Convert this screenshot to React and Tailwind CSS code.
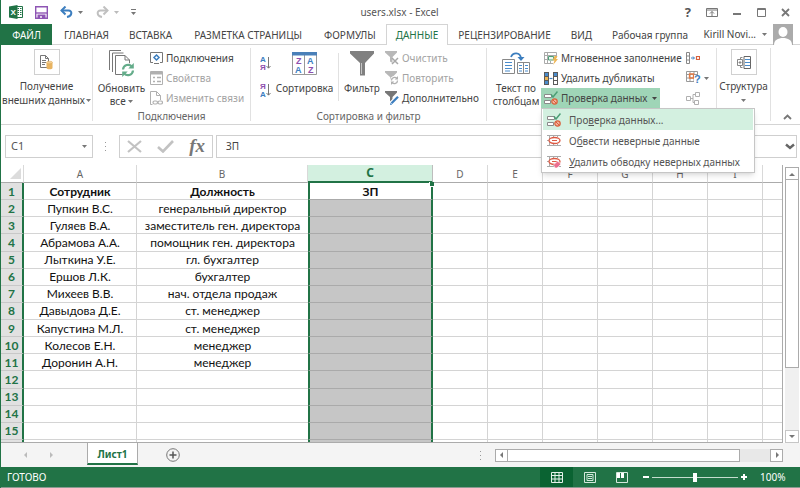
import React, { useState } from 'react';

const employees = [
  ['Пупкин В.С.', 'генеральный директор'],
  ['Гуляев В.А.', 'заместитель ген. директора'],
  ['Абрамова А.А.', 'помощник ген. директора'],
  ['Лыткина У.Е.', 'гл. бухгалтер'],
  ['Ершов Л.К.', 'бухгалтер'],
  ['Михеев В.В.', 'нач. отдела продаж'],
  ['Давыдова Д.Е.', 'ст. менеджер'],
  ['Капустина М.Л.', 'ст. менеджер'],
  ['Колесов Е.Н.', 'менеджер'],
  ['Доронин А.Н.', 'менеджер'],
];

const columns = ['A', 'B', 'C', 'D', 'E', 'F', 'G', 'H', 'I', ''];
const emptyColumns = ['D', 'E', 'F', 'G', 'H', 'I', ''];
const rowNumbers = Array.from({ length: 15 }, (_, i) => i + 1);

/* ---------- icons ---------- */

const Caret = ({ className = 'text-[#777]' }) => (
  <svg className={`inline-block shrink-0 ${className}`} width="5" height="3" viewBox="0 0 5 3">
    <path d="M0 0h5L2.5 3z" fill="currentColor" />
  </svg>
);

const Triangle = ({ dir, className = 'text-[#777]' }) => {
  const paths = {
    up: 'M0 5h6L3 2z',
    down: 'M0 1h6L3 4z',
    left: 'M4 0v6L1 3z',
    right: 'M2 0v6l3-3z',
  };
  return (
    <svg className={className} width="6" height="6" viewBox="0 0 6 6">
      <path d={paths[dir]} fill="currentColor" />
    </svg>
  );
};

const ExcelIcon = () => (
  <svg width="14" height="14" viewBox="0 0 14 14">
    <path d="M7.5 1.5h6v11h-6z" fill="#fff" stroke="#217346" />
    <path d="M8.5 3.5H10M11 3.5h1.5M8.5 5.5H10M11 5.5h1.5M8.5 7.5H10M11 7.5h1.5M8.5 9.5H10M11 9.5h1.5" stroke="#217346" />
    <path d="M0 1.5L8.5 0v14L0 12.5z" fill="#217346" />
    <text x="1.5" y="10" className="fill-white font-['Liberation_Sans',sans-serif] text-[8px] font-bold">X</text>
  </svg>
);

const SaveIcon = () => (
  <svg width="13" height="13" viewBox="0 0 13 13" fill="none" stroke="#8e55b4" strokeWidth="1.4">
    <path d="M.7.7h11.6v11.6H.7z" />
    <path d="M.7 7h11.6" />
    <path d="M3.2 12V9.3h6.6V12z" fill="#8e55b4" />
    <path d="M6 10v2" stroke="#fff" />
  </svg>
);

const UndoIcon = ({ flip, color }) => (
  <svg className={flip ? '-scale-x-100' : ''} width="13" height="12" viewBox="0 0 13 12" fill="none" stroke={color} strokeWidth="2">
    <path d="M1.5 4.5h7c4 0 4 5.5-1.5 6.5" />
    <path d="M5.5.5l-4 4 4 4" />
  </svg>
);

const ExternalDataIcon = () => (
  <svg width="13" height="15" viewBox="0 0 13 15">
    <path d="M.5.5h5l3 3v9h-8z" fill="#fff" stroke="#777" />
    <path d="M5.5.5v3h3M2 5.5h4M2 7.5h4M2 9.5h3" stroke="#777" fill="none" />
    <path d="M6.5 7.5v5.5c0 1.8 6 1.8 6 0V7.5z" fill="#e8b462" />
    <ellipse cx="9.5" cy="7.5" rx="3" ry="1.3" fill="#f3cf94" stroke="#e0a64e" strokeWidth=".5" />
  </svg>
);

const RefreshAllIcon = () => (
  <svg width="26" height="27" viewBox="0 0 26 27" fill="none">
    <path d="M12 .5H.5V20M14.5 3H3.5v19" stroke="#777" />
    <path d="M6.5 5.5H16l4.5 4.5v14.5h-14z" fill="#fff" stroke="#777" />
    <path d="M16 5.5V10h4.5" stroke="#777" />
    <circle cx="19" cy="20" r="7" fill="#fff" />
    <path d="M14 19.5c.5-5 6-6 9-3M24 20.5c-.5 5-6 6-9 3" stroke="#64ac8a" strokeWidth="2.2" />
    <path d="M24.8 13v5.5h-5.5zM13.2 27v-5.5h5.5z" fill="#64ac8a" />
  </svg>
);

const ConnectionsIcon = () => (
  <svg width="13" height="12" viewBox="0 0 13 12" fill="none">
    <path d="M3 10.5H.5V.5h12v10H10" stroke="#777" />
    <path d="M6.5 3L9 5.500 6.500 8 4 5.500z" stroke="#3c7ebf" strokeWidth="1.5" />
    <path d="M4 11.5h5" stroke="#777" />
  </svg>
);

const PropertiesIcon = () => (
  <svg width="13" height="14" viewBox="0 0 13 14" fill="none" stroke="#b0b0b0">
    <path d="M.5.5h12v13H.5z" />
    <path d="M1 2h11" strokeWidth="3" />
    <path d="M3 6.5h2M3 10.5h2M7 6.5h4M7 10.5h4" strokeWidth="1.5" />
  </svg>
);

const EditLinksIcon = () => (
  <svg width="13" height="14" viewBox="0 0 13 14" fill="none" stroke="#b0b0b0">
    <path d="M2.5 13.5h-2V.5h6l4 4V9" />
    <path d="M6.5.5v4h4" />
    <rect x="3" y="10" width="4.5" height="3" rx="1.5" strokeWidth="1.2" />
    <rect x="8" y="10" width="4.5" height="3" rx="1.5" strokeWidth="1.2" />
  </svg>
);

const SortIcon = ({ desc }) => (
  <svg width="11" height="17" viewBox="0 0 11 17" fill="none" className="font-['Liberation_Sans',sans-serif] text-[8px] font-bold">
    <text x="0" y="7" className={desc ? 'fill-[#8e4fae]' : 'fill-[#3c7ebf]'}>{desc ? 'Я' : 'А'}</text>
    <text x="0" y="15" className={desc ? 'fill-[#3c7ebf]' : 'fill-[#8e4fae]'}>{desc ? 'А' : 'Я'}</text>
    <path d="M8.5 2v11M6.500 11l2 2.200 2-2.200" stroke="#777" />
  </svg>
);

const SortDialogIcon = () => (
  <svg width="25" height="23" viewBox="0 0 25 23" fill="none" className="font-['Liberation_Sans',sans-serif] text-[9px] font-bold">
    <path d="M.5 1.5h24v21H.5zM12.5 3v20" fill="#fff" stroke="#999" />
    <path d="M0 0h25v3.500H0z" fill="#4a80b8" />
    <text x="4" y="12" className="fill-[#8e4fae]">Z</text>
    <text x="3" y="21" className="fill-[#3c7ebf]">A</text>
    <text x="15" y="12" className="fill-[#3c7ebf]">A</text>
    <text x="16" y="21" className="fill-[#8e4fae]">Z</text>
  </svg>
);

const FunnelIcon = () => (
  <svg width="24" height="25" viewBox="0 0 24 25">
    <path d="M0 0h24v2.5l-9 9.5v12.5h-5V12L0 2.5z" fill="#808080" />
    <path d="M11.5 12v11" stroke="#c4c4c4" />
  </svg>
);

const SmallFunnel = ({ kind }) => (
  <svg width="14" height="14" viewBox="0 0 14 14" fill="none">
    <path d="M0 0h12v1.5L7.500 6v6L5 10.500V6L0 1.500z" fill={kind === 'advanced' ? '#777' : '#b8b8b8'} />
    {kind === 'clear' && <path d="M7 7l6 6M13 7l-6 6" stroke="#a8a8a8" strokeWidth="1.5" />}
    {kind === 'reapply' && (
      <>
        <circle cx="9.5" cy="9.5" r="4.5" fill="#fff" />
        <path d="M6.5 9.500c0-3 3.500-4 5.500-2M12.500 9.500c0 3-3.500 4-5.500 2" stroke="#b0b0b0" strokeWidth="1.3" />
        <path d="M13 5v3.500H9.700zM6 14v-3.500h3.300z" fill="#b0b0b0" />
      </>
    )}
    {kind === 'advanced' && (
      <>
        <path d="M5.5 13l7.500-7.500" stroke="#fff" strokeWidth="4" />
        <path d="M6.5 12.200l6.500-6.500" stroke="#3c7ebf" strokeWidth="2.3" />
        <path d="M5 14l.6-2.200 1.600 1.600z" fill="#3c7ebf" />
      </>
    )}
  </svg>
);

const TextToColumnsIcon = () => (
  <svg width="28" height="23" viewBox="0 0 28 23" fill="none">
    <path d="M.5 7.5h12v14H.5z" fill="#fff" stroke="#888" />
    <path d="M3 10.5h7M3 13.5h7M3 16.5h7M3 19h5" stroke="#4a8ccc" />
    <path d="M15.5 10.5h12v11h-12zM21.5 10.5v11" fill="#fff" stroke="#888" />
    <path d="M17 13.5h3M17 16.5h3M17 19h3M23 13.5h3M23 16.5h3M23 19h3" stroke="#4a8ccc" />
    <path d="M9 5c2-5 9-5 10 1" stroke="#3c7ebf" strokeWidth="1.8" />
    <path d="M15.5 5h7L19 9z" fill="#3c7ebf" />
  </svg>
);

const FlashFillIcon = () => (
  <svg width="14" height="13" viewBox="0 0 14 13" fill="none">
    <path d="M9 11.5H.5V.5h12v5M.5 3.5h12M3.5.5v11M.5 7.5h3M6.500 9v2" stroke="#aaa" />
    <path d="M4.5 4.5h5V8h-5z" fill="#e9f5ee" stroke="#4c9e76" />
    <path d="M10.5 4h3L12 7h2l-5 6 1.500-4.500h-2z" fill="#edb556" />
  </svg>
);

const DuplicatesIcon = () => (
  <svg width="14" height="13" viewBox="0 0 14 13" fill="none">
    <path d="M0 0h5v13H0zM9 0h5v13H9z" fill="#5a5a5a" />
    <path d="M1 1h3v3H1zM1 9h3v3H1zM10 1h3v3h-3z" fill="#4a8ccc" />
    <path d="M1 5h3v3H1z" fill="#edb556" />
    <path d="M10 5h3v3h-3zM10 9h3v3h-3z" fill="#fff" />
    <path d="M5.5 6.5h3" stroke="#3c7ebf" strokeWidth="1.2" />
  </svg>
);

const ValidationIcon = () => (
  <svg width="14" height="14" viewBox="0 0 14 14" fill="none">
    <path d="M.5 3.5h7v3h-7zM.5 9.5h6v3h-6z" fill="#fff" stroke="#8a8a8a" />
    <path d="M7 3.5L9 6l4.500-5.500" stroke="#4c9e76" strokeWidth="1.5" />
    <circle cx="10.5" cy="10.5" r="2.7" fill="#f3b19a" stroke="#d8603c" strokeWidth="1.2" />
    <path d="M8.5 8.5l4 4" stroke="#d8603c" />
  </svg>
);

const CircleInvalidIcon = ({ erase }) => (
  <svg width="14" height="13" viewBox="0 0 14 13" fill="none">
    <path d="M0 1.5h14M0 11.5h14M2.5 1v11M6.5 1v2M10.5 1v2M6.5 10v2M10.5 10v2M0 6.5h2" stroke="#aaa" />
    <ellipse cx="7.5" cy="6.5" rx="5.5" ry="3" fill="#fff" stroke="#dd5a44" strokeWidth="1.3" />
    <path d="M5 6.5h5" stroke="#dd5a44" />
    {erase && <path d="M6.5 10l4-4L14 9l-4 4H8z" fill="#ec6f8f" stroke="#fff" strokeWidth=".6" />}
  </svg>
);

const ConsolidateIcon = () => (
  <svg width="14" height="12" viewBox="0 0 14 12" fill="none">
    <path d="M.5.5h3v11h-3zM.5 4h3M.5 8h3" stroke="#888" />
    <path d="M5 6h3M7 4.5L8.500 6 7 7.500" stroke="#3c7ebf" />
    <path d="M10.5 4.5h3v3h-3z" stroke="#d8603c" strokeWidth="1.2" />
  </svg>
);

const WhatIfIcon = () => (
  <svg width="15" height="16" viewBox="0 0 15 16" fill="none">
    <path d="M.5 1.5h11v10H.5zM.5 4.5h11M.5 8h11M4 1.5v10M8 1.5v10" stroke="#999" />
    <path d="M3.5 4h4v4h-4z" stroke="#e37b45" strokeWidth="1.3" />
    <path d="M8 5h7v10H8z" fill="#fff" />
    <text x="8" y="13" className="fill-[#3c7ebf] font-['Liberation_Sans',sans-serif] text-[11px] font-bold">?</text>
  </svg>
);

const RelationsIcon = () => (
  <svg width="14" height="13" viewBox="0 0 14 13" fill="none" stroke="#b0b0b0">
    <path d="M.5 4.5h4v4h-4zM9.5.5h4v4h-4zM8.5 8.5h4v4h-4zM4.5 6.5H7M9.5 2.500H7v8h1.500" />
  </svg>
);

const OutlineIcon = () => (
  <svg width="14" height="13" viewBox="0 0 14 13" fill="none">
    <path d="M3.5 3V1.5h2M3.5 10v1.5h2M.5 3.5h5v6h-5zM1.5 6.5h3M3 5v3" stroke="#888" />
    <path d="M7 .5h6.500v12H7z" stroke="#666" />
    <path d="M8 3.5h5M8 6.5h5M8 9.5h5" stroke="#4a8ccc" />
  </svg>
);

const Avatar = () => (
  <svg width="20" height="21" viewBox="0 0 20 21">
    <path d="M0 0h20v21H0z" fill="#ababab" />
    <ellipse cx="10" cy="8" rx="4.5" ry="5" fill="#fff" />
    <path d="M1 21c0-5 4-7 9-7s9 2 9 7z" fill="#fff" />
  </svg>
);

/* ---------- ribbon pieces ---------- */

const Tab = ({ children, active, wide }) => (
  <button
    className={
      active
        ? '-mb-px border border-b-0 border-[#d4d4d4] bg-white px-[9px] text-[#217346]'
        : `pt-px text-[#444] ${wide ? 'px-[12px]' : 'px-[10px]'}`
    }
  >
    {children}
  </button>
);

const SmallButton = ({ icon, children, disabled }) => (
  <button
    disabled={disabled}
    className={`flex h-5 items-center gap-[3px] whitespace-nowrap ${disabled ? 'text-[#a3a3a3]' : 'text-[#444]'}`}
  >
    {icon}
    {children}
  </button>
);

const Group = ({ label, className = '', children }) => (
  <section className={`mt-[3px] mb-[3px] flex shrink-0 flex-col border-r border-[#e1e1e1] ${className}`}>
    <div className="flex flex-1">{children}</div>
    {label && <div className="h-[10px] text-center leading-[10px] text-[#666]">{label}</div>}
  </section>
);

const BigButton = ({ icon, children, className = '' }) => (
  <button className={`flex shrink-0 flex-col items-center pt-px text-center leading-[13px] ${className}`}>
    <span className="flex h-[29px] items-center">{icon}</span>
    <span className="mt-[4px] whitespace-nowrap">{children}</span>
  </button>
);

const BoxedButton = ({ icon, children, className = '' }) => (
  <button className={`flex shrink-0 flex-col items-center pt-px text-center leading-[14px] ${className}`}>
    <span className="flex size-[26px] items-center justify-center border border-[#d0d0d0]">{icon}</span>
    <span className="mt-[4px] whitespace-nowrap">{children}</span>
  </button>
);

const MenuItem = ({ icon, children, active }) => (
  <button
    role="menuitem"
    className={`flex h-[21px] w-full items-center gap-[8px] whitespace-nowrap px-[4px] text-left ${active ? 'bg-[#d3f0e0]' : 'bg-white'}`}
  >
    {icon}
    <span>{children}</span>
  </button>
);

const ValidationMenu = () => {
  const [open, setOpen] = useState(true);

  return (
    <div className="relative">
      <button
        onClick={() => setOpen(!open)}
        aria-expanded={open}
        className="flex h-5 w-[119px] items-center gap-[3px] whitespace-nowrap bg-[#9fd5b7] px-[3px] text-[#444]"
      >
        <ValidationIcon />
        Проверка данных
        <Caret className="ml-auto text-[#444]" />
      </button>
      {open && (
        <div role="menu" className="absolute top-full left-0 z-20 w-[214px] border border-[#c6c6c6] bg-white px-px text-[#555] shadow-md">
          <MenuItem icon={<ValidationIcon />} active>Про<u>в</u>ерка данных...</MenuItem>
          <MenuItem icon={<CircleInvalidIcon />}>О<u>б</u>вести неверные данные</MenuItem>
          <MenuItem icon={<CircleInvalidIcon erase />}><u>У</u>далить обводку неверных данных</MenuItem>
        </div>
      )}
    </div>
  );
};

const TitleBar = () => (
  <header className="flex h-6 shrink-0 items-center pr-[10px] pl-[8px] text-[#555]">
    <div className="flex flex-1 items-center">
      <ExcelIcon />
      <button aria-label="Сохранить" className="ml-[12px]"><SaveIcon /></button>
      <button aria-label="Отменить" className="ml-[12px] flex items-center gap-[5px]">
        <UndoIcon color="#3c7ebf" />
        <Caret />
      </button>
      <button aria-label="Вернуть" className="ml-[13px] flex items-center gap-[5px]">
        <UndoIcon flip color="#c0c0c0" />
        <Caret className="text-[#bbb]" />
      </button>
      <button aria-label="Настройка панели" className="ml-[12px]">
        <svg width="5" height="6" viewBox="0 0 5 6"><path d="M0 0h5v1H0zM0 3h5L2.5 6z" fill="#777" /></svg>
      </button>
    </div>
    <h1>users.xlsx - Excel</h1>
    <div className="flex flex-1 items-center justify-end gap-[15px]">
      <button aria-label="Справка" className="text-[13px] leading-4 font-bold">?</button>
      <button aria-label="Параметры ленты">
        <svg width="12" height="9" viewBox="0 0 12 9" fill="none" stroke="#777">
          <path d="M.5.5h11v8H.5zM1 2h10M6 8V3.5M4 5.5l2-2 2 2" />
        </svg>
      </button>
      <button aria-label="Свернуть">
        <svg width="9" height="9" viewBox="0 0 9 9"><path d="M0 5h8v2H0z" fill="#777" /></svg>
      </button>
      <button aria-label="Развернуть">
        <svg width="9" height="9" viewBox="0 0 9 9" fill="none" stroke="#777"><path d="M.5.5h8v8h-8zM0 1.5h9" /></svg>
      </button>
      <button aria-label="Закрыть">
        <svg width="9" height="9" viewBox="0 0 9 9"><path d="M1 1l7 7M8 1L1 8" stroke="#777" strokeWidth="1.8" /></svg>
      </button>
    </div>
  </header>
);

const TabBar = () => (
  <nav className="flex h-[21px] shrink-0 items-stretch whitespace-nowrap border-b border-[#d4d4d4]">
    <button className="-mb-px mr-[2px] w-[51px] bg-[#217346] text-white">ФАЙЛ</button>
    <Tab>ГЛАВНАЯ</Tab>
    <Tab>ВСТАВКА</Tab>
    <Tab wide>РАЗМЕТКА СТРАНИЦЫ</Tab>
    <Tab>ФОРМУЛЫ</Tab>
    <Tab active>ДАННЫЕ</Tab>
    <Tab>РЕЦЕНЗИРОВАНИЕ</Tab>
    <Tab>ВИД</Tab>
    <Tab>Рабочая группа</Tab>
    <button className="mr-[7px] ml-auto flex items-center gap-[6px] text-[#444]">
      Kirill Novi...
      <Caret />
      <Avatar />
    </button>
  </nav>
);

const Ribbon = () => (
  <div className="flex h-[80px] shrink-0 border-b border-[#d4d4d4] text-[#444]">
    <Group className="w-[92px]">
      <BoxedButton icon={<ExternalDataIcon />} className="w-full">
        Получение<br />внешних данных<Caret className="mb-[2px] ml-px text-[#777]" />
      </BoxedButton>
    </Group>

    <Group label="Подключения" className="w-[158px]">
      <BigButton icon={<RefreshAllIcon />} className="w-[57px]">
        Обновить<br />все <Caret className="mb-[2px] text-[#777]" />
      </BigButton>
      <div>
        <SmallButton icon={<ConnectionsIcon />}>Подключения</SmallButton>
        <SmallButton icon={<PropertiesIcon />} disabled>Свойства</SmallButton>
        <SmallButton icon={<EditLinksIcon />} disabled>Изменить связи</SmallButton>
      </div>
    </Group>

    <Group label="Сортировка и фильтр" className="w-[236px]">
      <div className="flex w-[20px] flex-col items-end gap-[10px] pt-[7px]">
        <button aria-label="Сортировка от А до Я"><SortIcon /></button>
        <button aria-label="Сортировка от Я до А"><SortIcon desc /></button>
      </div>
      <BigButton icon={<SortDialogIcon />} className="w-[67px]">Сортировка</BigButton>
      <div className="mt-[5px] mb-[10px] border-r border-[#e1e1e1]" />
      <BigButton icon={<FunnelIcon />} className="w-[46px]">Фильтр</BigButton>
      <div>
        <SmallButton icon={<SmallFunnel kind="clear" />} disabled>Очистить</SmallButton>
        <SmallButton icon={<SmallFunnel kind="reapply" />} disabled>Повторить</SmallButton>
        <SmallButton icon={<SmallFunnel kind="advanced" />}>Дополнительно</SmallButton>
      </div>
    </Group>

    <Group className="w-[230px]">
      <BigButton icon={<TextToColumnsIcon />} className="w-[54px] pl-[4px]">
        Текст по<br />столбцам
      </BigButton>
      <div className="w-[145px]">
        <div className="pl-[3px]">
          <SmallButton icon={<FlashFillIcon />}>Мгновенное заполнение</SmallButton>
          <SmallButton icon={<DuplicatesIcon />}>Удалить дубликаты</SmallButton>
        </div>
        <ValidationMenu />
      </div>
      <div>
        <button aria-label="Консолидация" className="flex h-5 items-center"><ConsolidateIcon /></button>
        <button aria-label="Анализ что если" className="flex h-5 items-center gap-[3px]">
          <WhatIfIcon />
          <Caret />
        </button>
        <button aria-label="Отношения" disabled className="flex h-5 items-center"><RelationsIcon /></button>
      </div>
    </Group>

    <Group className="w-[54px]">
      <BoxedButton icon={<OutlineIcon />} className="w-full">
        Структура<br /><Caret className="mb-[2px] text-[#777]" />
      </BoxedButton>
    </Group>

    <button aria-label="Свернуть ленту" className="mt-auto mr-[8px] mb-[4px] ml-auto">
      <svg width="9" height="6" viewBox="0 0 9 6" fill="none" stroke="#777" strokeWidth="1.8"><path d="M1 5l3.5-3.5L8 5" /></svg>
    </button>
  </div>
);

const FormulaBar = () => (
  <div className="flex h-[40px] shrink-0 items-center pt-[2px] pr-[3px] pl-[4px]">
    <div className="flex h-[23px] w-[88px] items-center border border-[#cfcfcf] pr-[5px] pl-[5px]">
      <input aria-label="Имя ячейки" defaultValue="C1" className="w-full min-w-0 text-[11px] text-[#555] outline-none" />
      <Caret />
    </div>
    <svg className="mx-[12px]" width="2" height="9" viewBox="0 0 2 9"><path d="M0 0h1v1H0zM0 4h1v1H0zM0 8h1v1H0z" fill="#999" /></svg>
    <div className="flex h-[23px] w-[94px] shrink-0 items-center justify-between border border-[#cfcfcf] px-[7px]">
      <button aria-label="Отмена">
        <svg width="15" height="13" viewBox="0 0 15 13"><path d="M1 1l13 11M14 1L1 12" stroke="#c2c2c2" strokeWidth="2.2" /></svg>
      </button>
      <button aria-label="Ввод">
        <svg width="17" height="13" viewBox="0 0 17 13" fill="none"><path d="M1 7l5 4.5L16 1" stroke="#c2c2c2" strokeWidth="2.6" /></svg>
      </button>
      <button className="font-['Liberation_Serif',serif] text-[19px] leading-5 font-bold text-[#777] italic">fx</button>
    </div>
    <div className="ml-[3px] flex h-[23px] flex-1 items-center border border-[#cfcfcf] pr-px pl-[9px]">
      <input aria-label="Строка формул" defaultValue="ЗП" className="min-w-0 flex-1 text-[#444] outline-none" />
      <svg width="10" height="7" viewBox="0 0 10 7" fill="none"><path d="M1 1.5L5 5l4-3.500" stroke="#666" strokeWidth="2.4" /></svg>
    </div>
  </div>
);

const selectedEdge = 'border-x-2 border-x-[#217346]';

const Sheet = () => (
  <div className="min-w-0 flex-1 border-r border-b border-[#ababab]">
    <table className="h-full w-full table-fixed border-separate border-spacing-0 overflow-hidden text-center">
      <colgroup>
        <col className="w-[23px]" />
        <col className="w-[113px]" />
        <col className="w-[171px]" />
        <col className="w-[125px]" />
        <col className="w-[55px]" />
        <col className="w-[55px]" />
        <col className="w-[55px]" />
        <col className="w-[55px]" />
        <col className="w-[55px]" />
        <col className="w-[55px]" />
        <col />
      </colgroup>
      <thead>
        <tr className="h-[17px]">
          <th className="border-r border-b border-r-[#d9d9d9] border-b-[#ababab] p-0">
            <svg className="mr-[2px] ml-auto" width="11" height="11" viewBox="0 0 11 11"><path d="M11 0v11H0z" fill="#dcdcdc" /></svg>
          </th>
          {columns.map((c) => (
            <th
              key={c}
              className={
                c === 'C'
                  ? 'border-r border-b-2 border-r-[#bdbdbd] border-b-[#217346] bg-[#d3f0e0] p-0 text-[12px] leading-[16px] font-bold text-[#217346]'
                  : 'border-r border-b border-r-[#d9d9d9] border-b-[#ababab] p-0 leading-[16px] font-normal text-[#666] last:border-r-0'
              }
            >
              {c}
            </th>
          ))}
        </tr>
      </thead>
      <tbody className="font-[Lato,'Noto_Sans',sans-serif] text-[12px] leading-[15px] text-[#111]">
        {rowNumbers.map((n) => {
          const row = n === 1 ? ['Сотрудник', 'Должность'] : employees[n - 2] || ['', ''];
          const weight = n === 1 ? 'font-bold' : '';
          return (
            <tr key={n}>
              <th className="border-r-2 border-b border-r-[#217346] border-b-[#c8c8c8] bg-[#e1e1e1] p-0 font-bold text-[#217346]">{n}</th>
              <td className={`border-r border-b border-[#d4d4d4] p-0 ${weight}`}>{row[0]}</td>
              <td className={`border-b border-[#d4d4d4] p-0 whitespace-nowrap ${weight}`}>{row[1]}</td>
              {n === 1 ? (
                <td className={`relative border-b border-b-[#aaa] p-0 font-bold ${selectedEdge}`}>
                  ЗП
                  <span className="absolute -top-px -right-[3px] size-[5px] border-b border-l border-white bg-[#217346]" />
                </td>
              ) : (
                <td className={`border-b border-b-[#aaa] bg-[#c6c6c6] p-0 ${selectedEdge}`} />
              )}
              {emptyColumns.map((c) => (
                <td key={c} className="border-r border-b border-[#d4d4d4] p-0 last:border-r-0" />
              ))}
            </tr>
          );
        })}
        <tr className="h-[2px]">
          <th className="border-r-2 border-[#217346] bg-[#e1e1e1] p-0" />
          <td className="border-r border-[#d4d4d4] p-0" />
          <td className="p-0" />
          <td className={`bg-[#c6c6c6] p-0 ${selectedEdge}`} />
          {emptyColumns.map((c) => (
            <td key={c} className="border-r border-[#d4d4d4] p-0 last:border-r-0" />
          ))}
        </tr>
      </tbody>
    </table>
  </div>
);

const VerticalScroll = () => (
  <div className="mt-[2px] mr-px ml-[2px] flex w-[14px] shrink-0 flex-col bg-[#f0f0f0]">
    <button aria-label="Вверх" className="flex h-[13px] items-center justify-center border border-[#ababab] bg-white"><Triangle dir="up" /></button>
    <div className="flex-1"><div className="h-3/4 border border-t-0 border-[#ababab] bg-white" /></div>
    <button aria-label="Вниз" className="flex h-[13px] items-center justify-center border border-[#c6c6c6] bg-white"><Triangle dir="down" /></button>
  </div>
);

const SheetTabs = () => (
  <div className="flex h-6 shrink-0 items-center bg-[#f4f4f4]">
    <button aria-label="Предыдущий лист" className="ml-[22px]"><Triangle dir="left" className="text-[#bbb]" /></button>
    <button aria-label="Следующий лист" className="ml-[19px]"><Triangle dir="right" className="text-[#bbb]" /></button>
    <button className="ml-[33px] h-[22px] w-[51px] self-start border-x border-b-2 border-x-[#ababab] border-b-[#217346] bg-white pt-[2px] font-bold text-[#217346]">Лист1</button>
    <button aria-label="Новый лист" className="ml-[28px]">
      <svg width="14" height="14" viewBox="0 0 14 14" fill="none"><circle cx="7" cy="7" r="6.3" stroke="#777" /><path d="M7 3.5v7M3.5 7h7" stroke="#555" strokeWidth="1.5" /></svg>
    </button>
    <svg className="ml-auto" width="2" height="9" viewBox="0 0 2 9"><path d="M0 0h1v1H0zM0 4h1v1H0zM0 8h1v1H0z" fill="#999" /></svg>
    <div className="mr-[17px] ml-[13px] flex h-[13px] w-[288px] shrink-0 bg-[#e8e8e8]">
      <button aria-label="Влево" className="flex w-[13px] items-center justify-center border border-[#ababab] bg-white"><Triangle dir="left" /></button>
      <div className="w-[232px] border border-l-0 border-[#ababab] bg-white" />
      <button aria-label="Вправо" className="ml-auto flex w-[13px] items-center justify-center border border-[#ababab] bg-white"><Triangle dir="right" /></button>
    </div>
  </div>
);

const StatusBar = () => (
  <footer className="flex h-[21px] shrink-0 items-center border-b border-[#8a9a91] bg-[#217346] pr-[16px] pl-[6px] text-white">
    <span className="mr-auto">ГОТОВО</span>
    <button aria-label="Обычный" className="flex h-full w-[33px] items-center justify-center bg-[#0a6332]">
      <svg width="12" height="11" viewBox="0 0 12 11" fill="none" stroke="#e5f2ea"><path d="M.5.5h11v10H.5zM.5 3.5h11M.5 7h11M4 .5v10M8 .5v10" /></svg>
    </button>
    <button aria-label="Разметка страницы" className="flex h-full w-[33px] items-center justify-center">
      <svg width="12" height="11" viewBox="0 0 12 11" fill="none" stroke="#d5e8dc"><path d="M.5.5h11v10H.5zM3 2.5h6v6H3zM4 4.5h4M4 6.5h4" /></svg>
    </button>
    <button aria-label="Страничный режим" className="flex h-full w-[32px] items-center justify-center">
      <svg width="12" height="11" viewBox="0 0 12 11" fill="none"><path d="M.5.5h11v10H.5z" stroke="#d5e8dc" /><path d="M1 1h3v5H1zM5 1h3v5H5z" fill="#fff" /></svg>
    </button>
    <button aria-label="Уменьшить" className="ml-[5px]"><svg width="6" height="6" viewBox="0 0 6 6"><path d="M0 2h6v2H0z" fill="#fff" /></svg></button>
    <input
      type="range"
      aria-label="Масштаб"
      defaultValue="50"
      className="mx-[3px] h-[10px] w-[86px] appearance-none bg-transparent [&::-webkit-slider-runnable-track]:h-px [&::-webkit-slider-runnable-track]:bg-[#c5ddcf] [&::-webkit-slider-thumb]:-mt-[4px] [&::-webkit-slider-thumb]:h-[9px] [&::-webkit-slider-thumb]:w-[4px] [&::-webkit-slider-thumb]:appearance-none [&::-webkit-slider-thumb]:bg-white"
    />
    <button aria-label="Увеличить"><svg width="6" height="6" viewBox="0 0 6 6"><path d="M0 2h6v2H0zM2 0h2v6H2z" fill="#fff" /></svg></button>
    <span className="ml-[13px] w-[24px] whitespace-nowrap">100%</span>
  </footer>
);

const App = () => {
  return (
    <div className="flex h-screen flex-col overflow-hidden border-l border-[#217346] bg-white font-['Noto_Sans','Open_Sans',sans-serif] text-[10px] leading-[14px]">
      <TitleBar />
      <TabBar />
      <Ribbon />
      <FormulaBar />
      <main className="flex min-h-0 flex-1">
        <Sheet />
        <VerticalScroll />
      </main>
      <SheetTabs />
      <StatusBar />
    </div>
  );
};

export default App;
